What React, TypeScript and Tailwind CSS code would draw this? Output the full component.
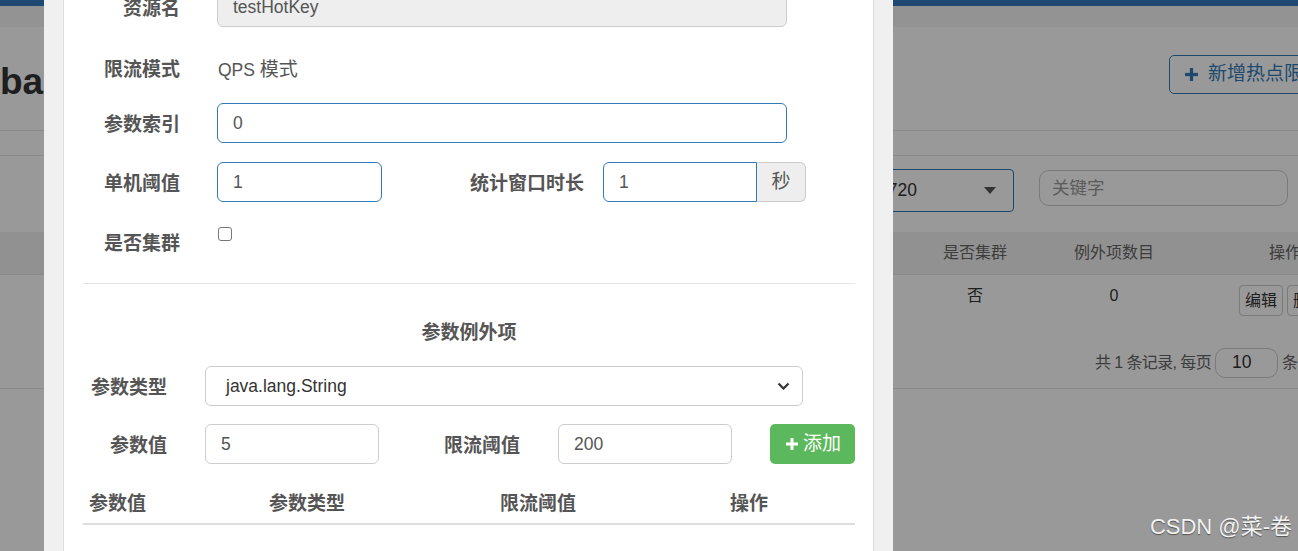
import React from 'react';

const font = "font-['Liberation_Sans','Noto_Sans_CJK_SC',sans-serif]";

const PlusGlyph: React.FC<{ size: number; className?: string }> = ({ size, className }) => (
  <svg width={size} height={size} viewBox="0 0 12 12" className={className} fill="currentColor">
    <rect x="4.5" y="0" width="3" height="12" />
    <rect x="0" y="4.5" width="12" height="3" />
  </svg>
);

const Field: React.FC<{ value: string; width: string; tone?: 'focus' | 'plain' | 'disabled'; className?: string }> = ({
  value,
  width,
  tone = 'plain',
  className = '',
}) => {
  const look =
    tone === 'focus'
      ? 'border-[#337ab7] bg-white'
      : tone === 'disabled'
      ? 'border-[#ccc] bg-[#eee]'
      : 'border-[#ccc] bg-white';
  return (
    <div className={`flex h-[40px] items-center border px-[15px] text-[17.5px] text-[#555] ${width} ${look} ${className}`}>
      {value}
    </div>
  );
};

const Label: React.FC<{ children: React.ReactNode; width: string }> = ({ children, width }) => (
  <div className={`${width} shrink-0 pt-[8px] text-right text-[19px] leading-[28px] font-bold text-[#555]`}>{children}</div>
);

const HotParamDialog: React.FC = () => (
  <div className="absolute left-[44px] top-[-40px] w-[849px] bg-[#f0f0f0] px-[19px]">
    <div className="h-[640px] w-[811px] border-x border-[#ddd] bg-white pl-[19px] pr-[18px] pt-[27px]">
      {/* main rule fields */}
      <div className="flex gap-[37px]">
        <Label width="w-[97px]">资源名</Label>
        <Field value="testHotKey" width="w-[570px]" tone="disabled" className="rounded-[6px]" />
      </div>
      <div className="mt-[21px] flex h-[40px] gap-[37px]">
        <Label width="w-[97px]">限流模式</Label>
        <div className="pt-[8px] pl-[1px] text-[17.5px] leading-[28px] text-[#555]">
          QPS <span className="text-[19px]">模式</span>
        </div>
      </div>
      <div className="mt-[15px] flex gap-[37px]">
        <Label width="w-[97px]">参数索引</Label>
        <Field value="0" width="w-[570px]" tone="focus" className="rounded-[6px]" />
      </div>
      <div className="mt-[19px] flex">
        <Label width="w-[97px]">单机阈值</Label>
        <Field value="1" width="w-[165px]" tone="focus" className="ml-[37px] rounded-[6px]" />
        <Label width="w-[202px]">统计窗口时长</Label>
        <div className="ml-[19px] flex">
          <Field value="1" width="w-[154px]" tone="focus" className="rounded-l-[6px]" />
          <div className="flex h-[40px] w-[49px] items-center justify-center rounded-r-[6px] border border-l-0 border-[#ccc] bg-[#eee] text-[19px] text-[#555]">
            秒
          </div>
        </div>
      </div>
      <div className="mt-[20px] flex h-[40px] gap-[37px]">
        <Label width="w-[97px]">是否集群</Label>
        <div className="ml-[1px] mt-[5px] h-[14px] w-[14px] rounded-[3px] border border-[#767676] bg-white" />
      </div>

      <div className="mt-[21px] border-t border-[#e5e5e5]" />

      {/* parameter exceptions */}
      <div className="mt-[35px] text-center text-[19px] leading-[28px] font-bold text-[#555]">参数例外项</div>

      <div className="mt-[19px] flex gap-[38px]">
        <Label width="w-[84px]">参数类型</Label>
        <div className="flex h-[40px] w-[598px] items-center justify-between rounded-[6px] border border-[#ccc] bg-white pl-[20px] pr-[12px] text-[17.5px] text-[#333]">
          java.lang.String
          <svg width="13" height="8" viewBox="0 0 13 8" fill="none" stroke="#333" strokeWidth="2.2">
            <path d="M1.5 1.5l5 5 5-5" />
          </svg>
        </div>
      </div>
      <div className="mt-[18px] flex">
        <Label width="w-[84px]">参数值</Label>
        <Field value="5" width="w-[174px]" className="ml-[38px] rounded-[6px]" />
        <Label width="w-[141px]">限流阈值</Label>
        <Field value="200" width="w-[174px]" className="ml-[38px] rounded-[6px]" />
        <button className="ml-[38px] flex h-[40px] w-[85px] items-center justify-center gap-[5px] rounded-[5px] bg-[#5cb85c] pl-[2px] text-[19px] text-white">
          <PlusGlyph size={12} />
          添加
        </button>
      </div>

      <div className="mt-[26px] flex border-b-2 border-[#ddd] pb-[5px] text-[19px] leading-[28px] font-bold text-[#555]">
        <div className="w-[180px] pl-[6px]">参数值</div>
        <div className="w-[231px] pl-[6px]">参数类型</div>
        <div className="w-[230px] pl-[6px]">限流阈值</div>
        <div className="flex-1 pl-[6px]">操作</div>
      </div>
    </div>
  </div>
);

const App: React.FC = () => {
  return (
    <div className={`relative h-[551px] w-full overflow-hidden bg-white text-[#333] ${font}`}>
      {/* page behind the dialog */}
      <div className="h-[6px] bg-[#347bc0]" />
      <div className="h-[21px] bg-[#f5f5f5]" />
      <div className="flex h-[103px] items-start">
        <h1 className="mt-[36px] text-[37px] leading-none font-bold text-[#333]">bal</h1>
        <div className="ml-auto w-[129px] shrink-0">
          <button className="mt-[28px] flex h-[39px] w-[220px] items-center gap-[10px] rounded-[5px] border border-[#337ab7] pl-[15px] text-[19px] whitespace-nowrap text-[#337ab7]">
            <PlusGlyph size={13} />
            新增热点限流规则
          </button>
        </div>
      </div>
      <div className="h-[25px] border-t border-[#e6e6e6]" />
      <div className="flex h-[77px] items-start justify-end border-t border-[#e6e6e6] pr-[10px]">
        <div className="mt-[13px] flex h-[43px] w-[300px] items-center justify-end rounded-[4px] border border-[#337ab7] pr-[17px] text-[17.5px] text-[#333]">
          <span className="whitespace-nowrap">192.168.1.4:8720</span>
          <svg width="12" height="7" viewBox="0 0 12 7" className="ml-[67px]" fill="#555">
            <path d="M0 0h12L6 7z" />
          </svg>
        </div>
        <div className="ml-[25px] mt-[14px] flex h-[36px] w-[249px] items-center rounded-[10px] border border-[#ccc] px-[12px] text-[17.5px] text-[#999]">
          关键字
        </div>
      </div>
      <div className="flex h-[43px] items-center border-b border-[#e6e6e6] bg-[#f2f2f2] text-[16px] text-[#666]">
        <div className="ml-auto flex w-[393px] shrink-0">
          <div className="w-[140px] shrink-0 text-center">是否集群</div>
          <div className="w-[138px] shrink-0 text-center">例外项数目</div>
          <div className="w-[204px] shrink-0 text-center">操作</div>
        </div>
      </div>
      <div className="flex h-[56px] items-start text-[16px] text-[#333]">
        <div className="ml-auto flex w-[393px] shrink-0">
          <div className="mt-[9px] w-[140px] shrink-0 text-center">否</div>
          <div className="mt-[9px] w-[138px] shrink-0 text-center">0</div>
          <div className="mt-[10px] flex w-[204px] shrink-0 justify-center gap-[4px]">
            <div className="flex h-[31px] w-[44px] items-center justify-center rounded-[4px] border border-[#ccc] bg-white">编辑</div>
            <div className="flex h-[31px] w-[44px] items-center justify-center rounded-[4px] border border-[#ccc] bg-white">删除</div>
          </div>
        </div>
      </div>
      <div className="flex h-[58px] items-center border-b border-[#e6e6e6] pt-[6px] text-[16px] text-[#666]">
        <div className="ml-auto flex w-[203px] shrink-0 items-center whitespace-nowrap tracking-[-0.6px]">
          共 1 条记录, 每页
          <div className="mx-[4px] flex h-[30px] w-[63px] shrink-0 items-center rounded-[10px] border border-[#ccc] bg-white pl-[16px] text-[17.5px] tracking-normal text-[#333]">
            10
          </div>
          条记录
        </div>
      </div>

      {/* modal backdrop */}
      <div className="absolute inset-0 bg-black/40" />
      <HotParamDialog />

      <div className="absolute right-[6px] bottom-[11px] text-[22px] leading-[26px] text-[#f2f2f2] [text-shadow:0_1px_1px_rgba(0,0,0,0.45)]">
        CSDN @菜-卷
      </div>
    </div>
  );
};

export default App;
